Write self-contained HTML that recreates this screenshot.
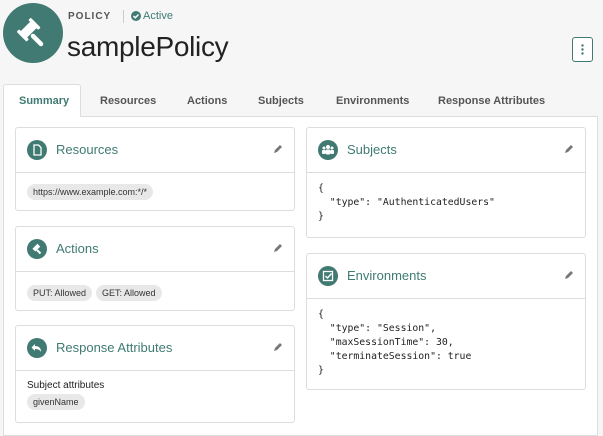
<!DOCTYPE html>
<html><head><style>
*{box-sizing:border-box;margin:0;padding:0}
body{width:603px;height:431px;overflow:hidden;background:#f6f6f6;font-family:"Liberation Sans",sans-serif;position:relative;color:#333}
.abs{position:absolute}
.av{left:3px;top:3px;width:60px;height:60px;border-radius:50%;background:#417a72}
.tab{position:absolute;top:95px;font-size:11px;font-weight:bold;color:#555}
.panel{left:3px;top:116px;width:595px;height:320px;background:#fff;border:1px solid #ddd}
.card{position:absolute;background:#fff;border:1px solid #ddd;border-radius:3px}
.hd{height:45px;border-bottom:1px solid #ddd;position:relative}
.ic{position:absolute;left:11px;top:12px;width:20px;height:20px;border-radius:50%;background:#417a72}
.tt{position:absolute;left:40px;top:14px;font-size:13px;color:#3f7b72}
.pen{position:absolute;right:11px;top:16px}
.pill{display:inline-block;background:#e8e8e8;border-radius:8px;font-size:9px;color:#333;padding:3px 6px;margin-right:4px}
pre{font-family:"DejaVu Sans Mono","Liberation Mono",monospace;font-size:9.8px;line-height:14px;color:#222}
</style></head><body>
<div class="abs av"><svg width="60" height="60" viewBox="0 0 60 60"><g fill="#fff" transform="rotate(-45 26 27)"><rect x="18" y="22" width="16" height="9" rx="1"/><rect x="16" y="19.5" width="3.5" height="14" rx="1"/><rect x="32.5" y="19.5" width="3.5" height="14" rx="1"/></g><path d="M30 33 L38 41" stroke="#fff" stroke-width="4.5" stroke-linecap="round"/></svg></div>
<div class="abs" style="left:68px;top:11px;font-size:10px;font-weight:bold;letter-spacing:1px;color:#555">POLICY</div>
<div class="abs" style="left:123px;top:10px;width:1px;height:13px;background:#ccc"></div>
<svg class="abs" style="left:131px;top:11px" width="10" height="10" viewBox="0 0 10 10"><circle cx="5" cy="5" r="5" fill="#417a72"/><path d="M2.5 5 L4.3 6.8 L7.5 3.5" stroke="#fff" stroke-width="1.5" fill="none"/></svg>
<div class="abs" style="left:143px;top:10px;font-size:11px;color:#3f7b72">Active</div>
<div class="abs" style="left:67px;top:31px;font-size:28px;font-weight:300;color:#222;letter-spacing:-0.3px">samplePolicy</div>
<div class="abs" style="left:572px;top:37px;width:21px;height:25px;border:1px solid #417a72;border-radius:3px;background:#fff"><svg width="19" height="23"><circle cx="9.5" cy="7.5" r="1.2" fill="#417a72"/><circle cx="9.5" cy="11.5" r="1.2" fill="#417a72"/><circle cx="9.5" cy="15.5" r="1.2" fill="#417a72"/></svg></div>
<div class="abs panel"></div>
<div class="abs" style="left:3px;top:84px;width:78px;height:33px;background:#fff;border:1px solid #ddd;border-bottom:none;border-radius:3px 3px 0 0"></div>
<div class="tab" style="left:19px;color:#3f7b72">Summary</div>
<div class="tab" style="left:100px">Resources</div>
<div class="tab" style="left:187px">Actions</div>
<div class="tab" style="left:258px">Subjects</div>
<div class="tab" style="left:336px">Environments</div>
<div class="tab" style="left:438px">Response Attributes</div>

<div class="card" style="left:15px;top:127px;width:280px;height:84px"><div class="hd"><div class="ic"><svg width="20" height="20"><path d="M7 5h4.5l2.5 2.5V15H7z" fill="none" stroke="#fff" stroke-width="1.3"/></svg></div><div class="tt">Resources</div><svg class="pen" width="10" height="10"><path d="M1 9l1-3 5-5 2 2-5 5z" fill="#777"/></svg></div><div style="padding:9px 11px"><span class="pill">https://www.example.com:*/*</span></div></div>

<div class="card" style="left:15px;top:226px;width:280px;height:85px"><div class="hd"><div class="ic"><svg width="20" height="20"><g transform="rotate(-45 9 9)" fill="#fff"><rect x="6" y="7" width="7" height="4"/></g><path d="M10 11l3.5 3.5" stroke="#fff" stroke-width="2"/></svg></div><div class="tt">Actions</div><svg class="pen" width="10" height="10"><path d="M1 9l1-3 5-5 2 2-5 5z" fill="#777"/></svg></div><div style="padding:11px 11px"><span class="pill">PUT: Allowed</span><span class="pill">GET: Allowed</span></div></div>

<div class="card" style="left:15px;top:325px;width:280px;height:98px"><div class="hd"><div class="ic"><svg width="20" height="20"><path d="M8 6L4.5 9.5 8 13V11c3 0 5 1 6 3 0-4-2-6-6-6z" fill="#fff"/></svg></div><div class="tt">Response Attributes</div><svg class="pen" width="10" height="10"><path d="M1 9l1-3 5-5 2 2-5 5z" fill="#777"/></svg></div><div style="padding:9px 11px;font-size:10px;color:#222">Subject attributes<div style="margin-top:3px"><span class="pill">givenName</span></div></div></div>

<div class="card" style="left:306px;top:127px;width:280px;height:111px"><div class="hd"><div class="ic"><svg width="20" height="20" fill="#fff"><circle cx="10" cy="7" r="2"/><circle cx="6" cy="8" r="1.5"/><circle cx="14" cy="8" r="1.5"/><rect x="7.5" y="9.5" width="5" height="5" rx="1.5"/><rect x="4" y="10" width="3.5" height="4" rx="1"/><rect x="12.5" y="10" width="3.5" height="4" rx="1"/></svg></div><div class="tt">Subjects</div><svg class="pen" width="10" height="10"><path d="M1 9l1-3 5-5 2 2-5 5z" fill="#777"/></svg></div><pre style="padding:9px 11px">{
  "type": "AuthenticatedUsers"
}</pre></div>

<div class="card" style="left:306px;top:253px;width:280px;height:137px"><div class="hd"><div class="ic"><svg width="20" height="20"><rect x="5.5" y="5.5" width="9" height="9" fill="none" stroke="#fff" stroke-width="1.3"/><path d="M7.5 10l2 2 4-4.5" stroke="#fff" stroke-width="1.4" fill="none"/></svg></div><div class="tt">Environments</div><svg class="pen" width="10" height="10"><path d="M1 9l1-3 5-5 2 2-5 5z" fill="#777"/></svg></div><pre style="padding:9px 11px">{
  "type": "Session",
  "maxSessionTime": 30,
  "terminateSession": true
}</pre></div>
</body></html>
